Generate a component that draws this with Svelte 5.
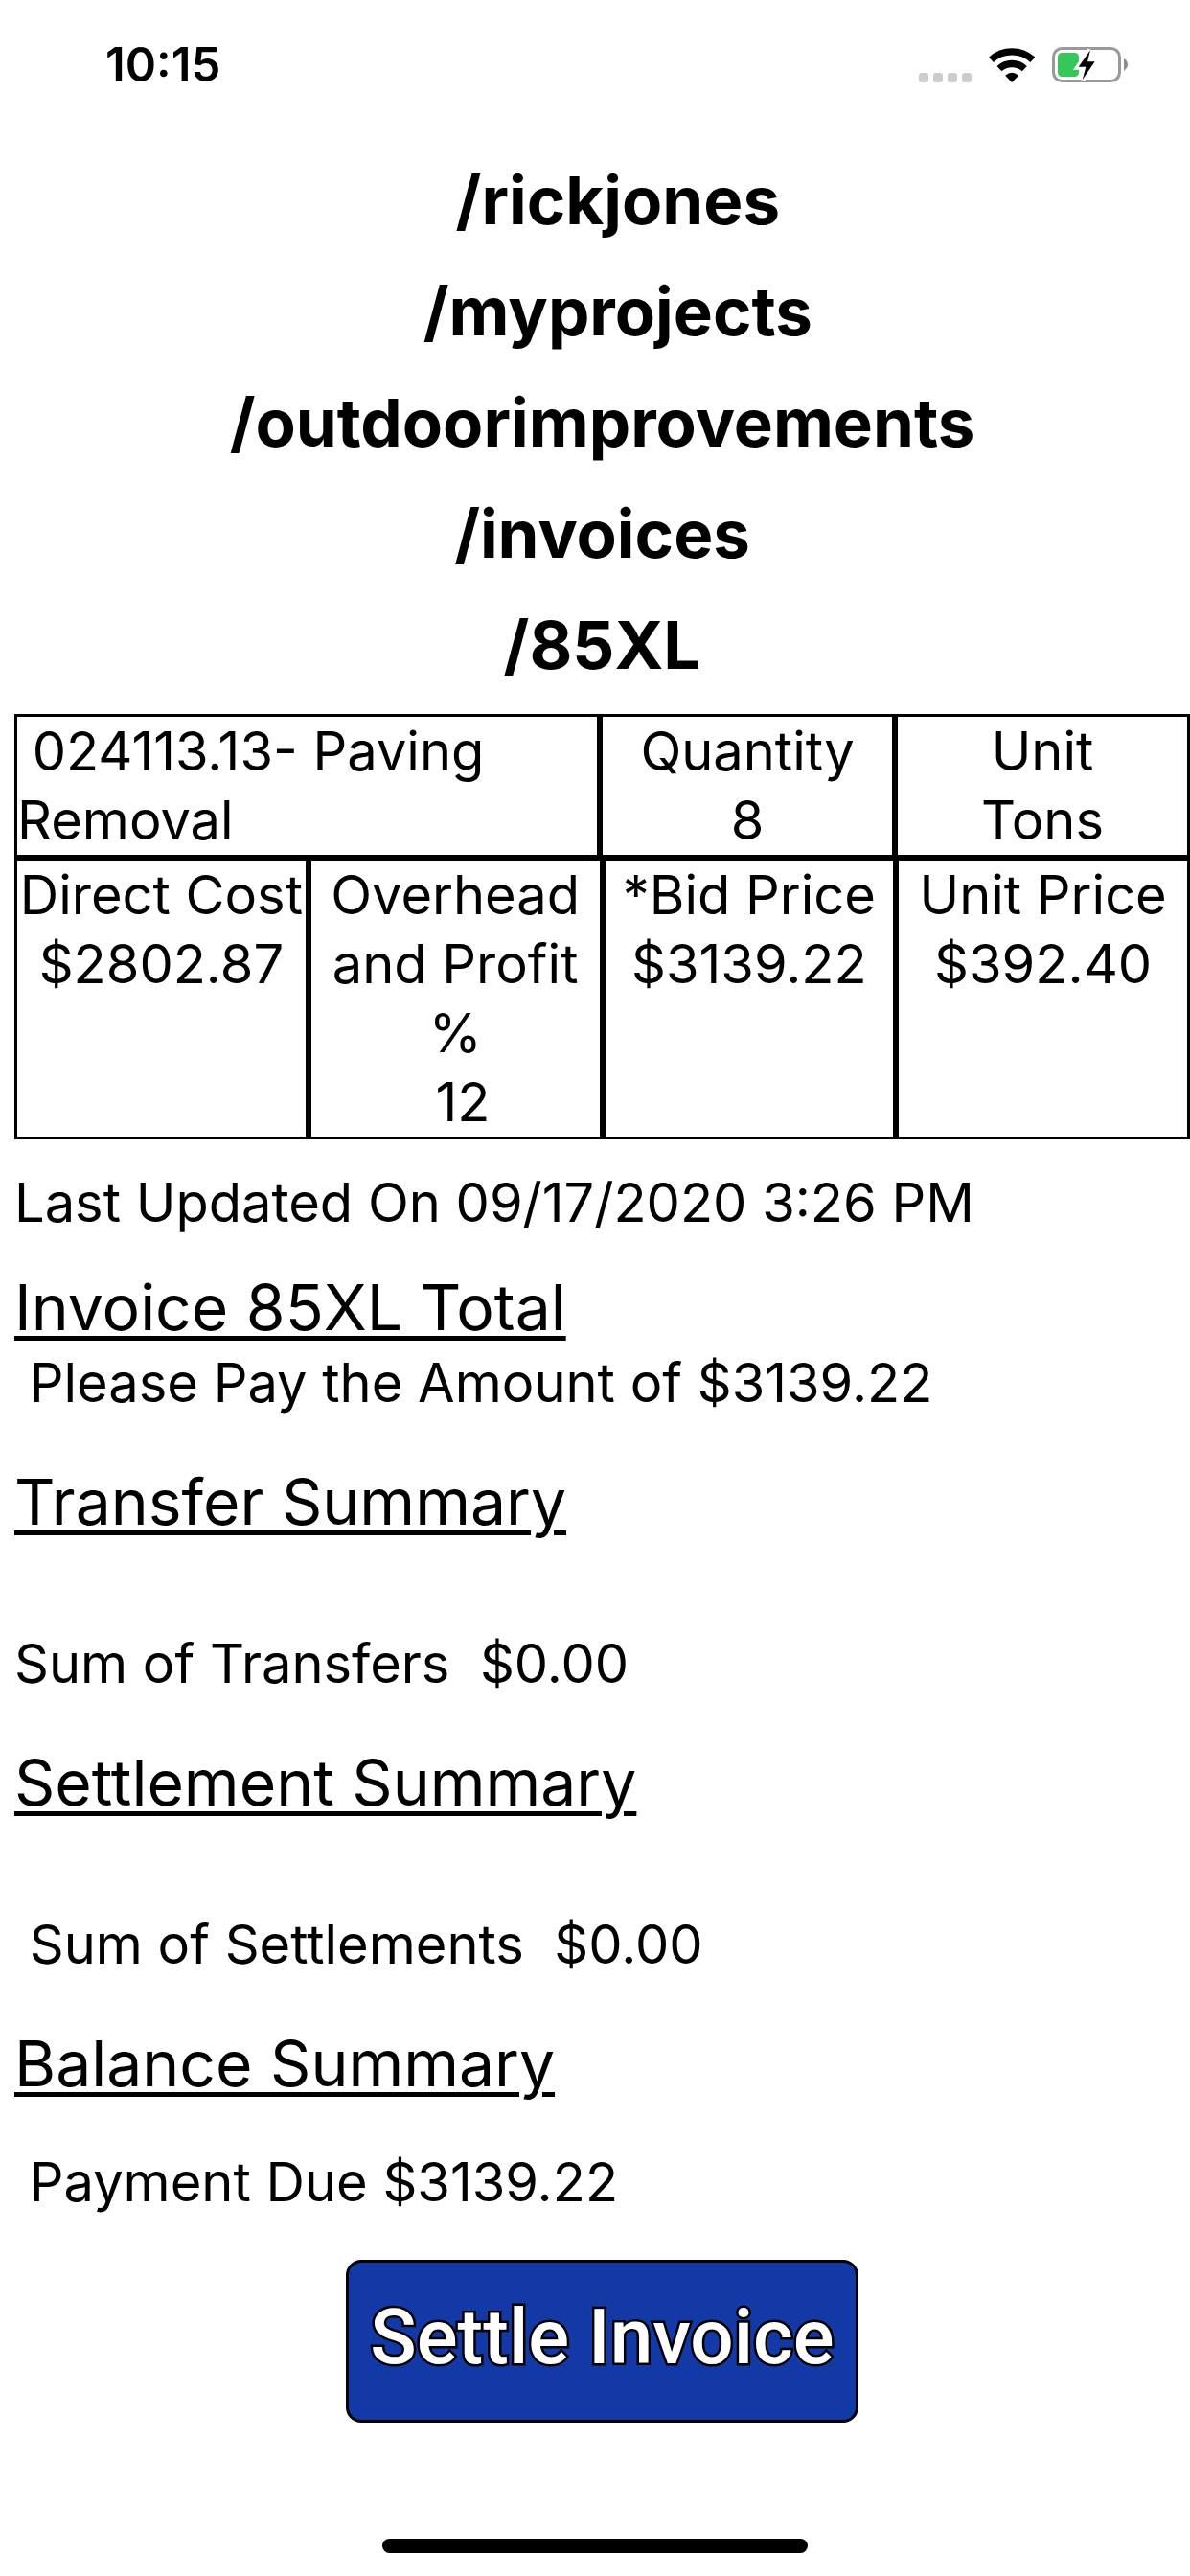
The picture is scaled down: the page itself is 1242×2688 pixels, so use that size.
<script>
  const path = ['\u00a0\u00a0/rickjones', '\u00a0\u00a0/myprojects', '/outdoorimprovements', '/invoices', '/85XL'];
  const signalDots = [1, 2, 3, 4];
</script>

<div class="screen">
  <header class="status">
    <time class="clock">10:15</time>
    <div class="indicators">
      <div class="signal" aria-label="No signal">
        {#each signalDots as dot (dot)}<i></i>{/each}
      </div>
      <svg class="wifi" viewBox="304 57 144 108" role="img" aria-label="Wi-Fi">
        <path d="M311.500 94A96 96 0 0 1 441.500 94" fill="none" stroke="#000" stroke-width="22" />
        <path d="M337 122A58 58 0 0 1 416 122" fill="none" stroke="#000" stroke-width="22" />
        <path d="M376.500 165L355.500 143Q376.500 125 397.500 143Z" />
      </svg>
      <svg class="battery" viewBox="504 57 240 111" role="img" aria-label="Battery charging">
        <rect x="508.500" y="61.500" width="207" height="102" rx="27" fill="none" stroke="#999" stroke-width="9" />
        <rect x="522" y="75" width="66" height="75" rx="13" fill="#34c759" />
        <path d="M729 93Q741 100 741 112Q741 124 729 131Z" fill="#8c8c8c" />
        <path d="M624 67L587 119H610L599 160L638 103H615Z" stroke="#fff" stroke-width="18" />
        <path d="M624 67L587 119H610L599 160L638 103H615Z" />
      </svg>
    </div>
  </header>

  <main>
    <nav class="path" aria-label="Location">
      {#each path as part (part)}<a href="#top">{part}</a>{/each}
    </nav>

    <table>
      <tbody>
        <tr class="item">
          <td class="name">&nbsp;024113.13- Paving Removal</td>
          <td>Quantity<br />8</td>
          <td>Unit<br />Tons</td>
        </tr>
        <tr class="costs">
          <td>Direct Cost<br />$2802.87</td>
          <td>Overhead and Profit %<br />&nbsp;12</td>
          <td>*Bid Price<br />$3139.22</td>
          <td>Unit Price<br />$392.40</td>
        </tr>
      </tbody>
    </table>

    <p class="updated">Last Updated On 09/17/2020 3:26 PM</p>

    <section class="total">
      <h2>Invoice 85XL Total</h2>
      <p>&nbsp;Please Pay the Amount of $3139.22</p>
    </section>
    <section class="sum">
      <h2>Transfer Summary</h2>
      <p>Sum of Transfers&nbsp; $0.00</p>
    </section>
    <section class="sum">
      <h2>Settlement Summary</h2>
      <p>&nbsp;Sum of Settlements&nbsp; $0.00</p>
    </section>
    <section class="balance">
      <h2>Balance Summary</h2>
      <p>&nbsp;Payment Due $3139.22</p>
    </section>

    <button type="button">Settle Invoice</button>
  </main>

  <div class="home"></div>
</div>

<style>
  :global(body) {
    margin: 0;
    background: #fff;
  }
  .screen {
    box-sizing: border-box;
    min-height: 100vh;
    padding-bottom: 24px;
    display: flex;
    flex-direction: column;
    color: #000;
    font-family: Inter, "Liberation Sans", sans-serif;
    font-size: 56px;
    line-height: 72px;
  }
  .status {
    display: flex;
    justify-content: space-between;
    align-items: flex-start;
    padding: 38px 64px 68px 110px;
  }
  .clock {
    font-size: 49px;
    font-weight: 600;
    line-height: 60px;
  }
  .indicators {
    display: flex;
    align-items: flex-end;
    height: 48px;
  }
  .signal {
    display: flex;
    gap: 5px;
  }
  .signal i {
    width: 10px;
    height: 10px;
    border-radius: 3px;
    background: #ccc;
  }
  .wifi {
    width: 48px;
    height: 36px;
    margin: 0 18px;
  }
  .battery {
    width: 80px;
    height: 37px;
  }
  main {
    display: flex;
    flex-direction: column;
    padding-left: 15px;
  }
  .path {
    display: flex;
    flex-direction: column;
    align-items: center;
    gap: 30px;
    font-size: 69px;
    font-weight: 700;
    line-height: 86px;
  }
  .path a {
    color: inherit;
    text-decoration: none;
  }
  table {
    display: block;
    margin-top: 29px;
  }
  tbody {
    display: block;
  }
  tr {
    display: grid;
  }
  .item {
    grid-template-columns: 611fr 308fr 308fr;
  }
  .costs {
    grid-template-columns: repeat(4, 1fr);
  }
  td {
    box-sizing: border-box;
    min-width: 0;
    padding: 0;
    border: 3px solid #000;
    text-align: center;
  }
  .name {
    text-align: left;
  }
  p,
  h2 {
    margin: 0;
  }
  h2 {
    font-size: 66px;
    font-weight: 400;
    line-height: 86px;
    text-decoration: underline;
    text-decoration-thickness: 5px;
    text-underline-offset: 6px;
  }
  .updated,
  .total {
    margin-top: 30px;
  }
  .sum,
  .balance {
    display: flex;
    flex-direction: column;
    gap: 90px;
    margin-top: 45px;
  }
  .balance {
    gap: 45px;
  }
  button {
    align-self: center;
    box-sizing: border-box;
    height: 170px;
    margin-top: 45px;
    padding: 0 22px 8px;
    border: 3px solid #000;
    border-radius: 16px;
    background: #1239a6;
    color: #fff;
    font-family: Roboto, sans-serif;
    font-size: 80px;
    font-weight: 500;
    line-height: 100px;
    -webkit-text-stroke: 5px #000;
    paint-order: stroke fill;
  }
  .home {
    align-self: center;
    width: 444px;
    height: 15px;
    margin-top: auto;
    border-radius: 8px;
    background: #000;
  }
</style>
